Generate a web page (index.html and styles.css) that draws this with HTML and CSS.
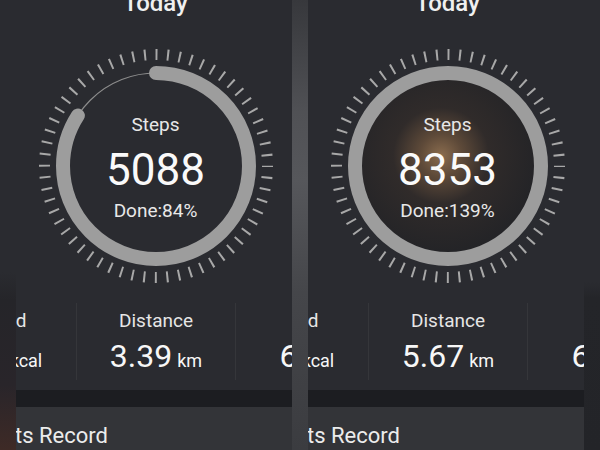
FILE: index.html
```html
<!DOCTYPE html>
<html lang="en">
<head>
    <meta charset="UTF-8">
    <meta name="viewport" content="width=device-width, initial-scale=1.0">
    <title>Today</title>
    <link rel="stylesheet" href="styles.css">
</head>
<body>
    <div class="edge edge-left"></div>

    <section class="screen">
        <div class="page">
            <h1 class="title">Today</h1>
            <div class="dial">
                <svg class="ring" viewBox="0 0 240 240" width="240" height="240">
                    <circle class="ticks" cx="120" cy="120" r="111.5"/>
                    <circle class="track" cx="120" cy="120" r="93"/>
                    <!-- 84% of 2*pi*93 -->
                    <circle class="arc" cx="120" cy="120" r="93" stroke-dasharray="490.8 584.3" transform="rotate(-90 120 120)"/>
                </svg>
                <div class="readout">
                    <span class="readout-label">Steps</span>
                    <span class="readout-value">5088</span>
                    <span class="readout-done">Done:84%</span>
                </div>
            </div>
            <div class="stats">
                <div class="stat">
                    <span class="stat-label">Burned</span>
                    <span class="stat-value">215<small>kcal</small></span>
                </div>
                <div class="stat">
                    <span class="stat-label">Distance</span>
                    <span class="stat-value">3.39<small>km</small></span>
                </div>
                <div class="stat">
                    <span class="stat-label">Time</span>
                    <span class="stat-value">62<small>min</small></span>
                </div>
            </div>
            <div class="band"></div>
            <div class="card">
                <h2 class="card-title">Sports Record</h2>
            </div>
        </div>
    </section>

    <div class="gap"></div>

    <section class="screen">
        <div class="page">
            <h1 class="title">Today</h1>
            <div class="dial">
                <svg class="ring" viewBox="0 0 240 240" width="240" height="240">
                    <defs>
                        <radialGradient id="glow" cx="0.46" cy="0.44" r="0.55">
                            <stop offset="0" stop-color="#8a6c4e"/>
                            <stop offset="0.22" stop-color="#5e4a39"/>
                            <stop offset="0.5" stop-color="#302b2a"/>
                            <stop offset="1" stop-color="#242427"/>
                        </radialGradient>
                    </defs>
                    <circle class="ticks" cx="120" cy="120" r="111.5"/>
                    <circle cx="120" cy="120" r="87" fill="url(#glow)"/>
                    <circle class="arc" cx="120" cy="120" r="93"/>
                </svg>
                <div class="readout">
                    <span class="readout-label">Steps</span>
                    <span class="readout-value">8353</span>
                    <span class="readout-done">Done:139%</span>
                </div>
            </div>
            <div class="stats">
                <div class="stat">
                    <span class="stat-label">Burned</span>
                    <span class="stat-value">362<small>kcal</small></span>
                </div>
                <div class="stat">
                    <span class="stat-label">Distance</span>
                    <span class="stat-value">5.67<small>km</small></span>
                </div>
                <div class="stat">
                    <span class="stat-label">Time</span>
                    <span class="stat-value">68<small>min</small></span>
                </div>
            </div>
            <div class="band"></div>
            <div class="card">
                <h2 class="card-title">Sports Record</h2>
            </div>
        </div>
    </section>

    <div class="edge edge-right"></div>
</body>
</html>
```

FILE: styles.css
```css
/* 整体：两页手机截图并排，左右两条边，中间一条分隔 */
body{
    margin: 0;
    width: 600px;
    height: 450px;
    overflow: hidden;
    display: flex;
    background: #2a2b30;
    font-family: Roboto, "Liberation Sans", sans-serif;
    color: #ededed;
}
.edge{
    width: 16px;
    flex: none;
}
.edge-left{
    background: linear-gradient(#2a2b30 0, #2a2b30 272px, #252529 300px, #29252a 385px, #3e2a26 450px);
}
.edge-right{
    background: linear-gradient(#2a2b30 0, #2a2b30 282px, #242529 298px, #232428 450px);
}
.gap{
    width: 16px;
    flex: none;
    background: linear-gradient(#37383c 0, #505155 25%, #56575b 40%, #45464a 65%, #3b3c40 100%);
}

/* 每一屏宽276，内容区279，多出的部分被裁掉 */
.screen{
    width: 276px;
    flex: none;
    overflow: hidden;
}
.page{
    width: 279px;
    height: 450px;
    display: flex;
    flex-direction: column;
}

.title{
    margin: -9px 0 0;
    font-size: 24px;
    line-height: 24px;
    font-weight: 500;
    text-align: center;
    color: #f0f0f0;
}

/* 圆环：svg和文字叠在同一个格子里 */
.dial{
    display: grid;
    width: 240px;
    height: 240px;
    margin: 31px auto 0;
}
.ring, .readout{
    grid-area: 1 / 1;
}
.ticks{
    fill: none;
    stroke: #a8a8a8;
    stroke-width: 11;
    stroke-dasharray: 2 9.676;
    stroke-dashoffset: 1;
}
.track{
    fill: none;
    stroke: #8c8c8c;
    stroke-width: 1.2;
}
.arc{
    fill: none;
    stroke: #9d9d9d;
    stroke-width: 14;
    stroke-linecap: round;
}
.readout{
    display: flex;
    flex-direction: column;
    align-items: center;
    padding-top: 68px;
}
.readout-label, .readout-done{
    font-size: 19px;
    line-height: 22px;
    color: #e8e8e8;
}
.readout-value{
    margin-top: 10px;
    font-size: 44px;
    line-height: 48px;
    color: #fafafa;
}
.readout-done{
    margin-top: 6px;
}

/* 数据行：三列，每列159，左右两列只露出一点 */
.stats{
    display: flex;
    margin: 17px 0 0 -99px;
}
.stat{
    width: 159px;
    height: 77px;
    flex: none;
    box-sizing: border-box;
    padding-top: 7px;
    display: flex;
    flex-direction: column;
    align-items: center;
    white-space: nowrap;
}
.stat + .stat{
    border-left: 1px solid #35363a;
}
.stat-label{
    font-size: 19px;
    line-height: 22px;
    color: #e6e6e6;
}
.stat-value{
    margin-top: 6px;
    font-size: 32px;
    line-height: 36px;
    color: #f7f7f7;
}
.stat-value small{
    margin-left: 5px;
    font-size: 18px;
}

.band{
    height: 17px;
    margin-top: 10px;
    background: #1c1d21;
}
.card{
    flex: 1;
    background: #333438;
    padding-top: 16px;
    white-space: nowrap;
}
.card-title{
    margin: 0 0 0 -47px;
    font-size: 22px;
    line-height: 25px;
    font-weight: 400;
    color: #ececec;
}
```
